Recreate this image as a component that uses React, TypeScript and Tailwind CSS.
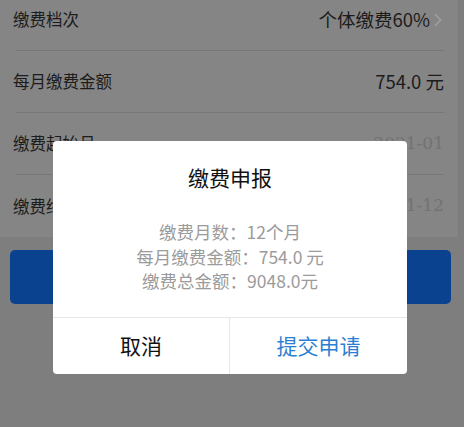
import { ChevronRight } from "lucide-react";

const FONT = { fontFamily: '"Noto Sans CJK SC", "Noto Sans", sans-serif' };

const rows = [
  { label: "缴费档次", value: "个体缴费60%", arrow: true },
  { label: "每月缴费金额", value: "754.0 元" },
  { label: "缴费起始月", value: "2021-01", muted: true },
  { label: "缴费终止月", value: "2021-12", muted: true },
];

export default function App() {
  return (
    <div className="relative w-[464px] h-[427px] overflow-hidden bg-[#7e7e7e]" style={FONT}>
      {/* page under the mask */}
      <div className="w-[459px] bg-[#858585] border-r border-[#7a7a7a] -mt-[11px]">
        {rows.map((r, i) => (
          <div key={r.label} className="pl-[16px] pr-[14px]">
            <div className={`h-[62px] flex items-center justify-between ${i < rows.length - 1 ? "border-b border-[#777777]" : ""}`}>
              <span className="-ml-[3px] text-[16.5px] text-[#1c1c1c]">{r.label}</span>
              {r.muted ? (
                <span className="text-[17px] text-[#727272]" style={{ fontFamily: '"DejaVu Serif", "Liberation Serif", serif' }}>{r.value}</span>
              ) : (
                <span className="flex items-center text-[18.5px] text-[#1c1c1c]">
                  {r.value}
                  {r.arrow && <ChevronRight size={22} strokeWidth={1.6} className="text-[#a0a0a0] -mr-[5px] -ml-[3px]" />}
                </span>
              )}
            </div>
          </div>
        ))}
      </div>
      <div className="pl-[10px] pr-[13px] mt-[13px]">
        <div className="h-[54px] rounded-[5px] bg-[#0b4290]" />
      </div>

      {/* dialog */}
      <div className="absolute left-[53px] top-[141px] w-[354px] rounded-[4px] bg-white overflow-hidden">
        <div className="pt-[21px] pb-[23px] text-center">
          <p className="text-[21px] leading-[30px] text-[#111111]">缴费申报</p>
          <div className="mt-[28px] text-[17.5px] leading-[24.5px] text-[#9b9b9b]">
            <p>缴费月数：12个月</p>
            <p>每月缴费金额：754.0 元</p>
            <p>缴费总金额：9048.0元</p>
          </div>
        </div>
        <div className="flex h-[57px] border-t border-[#e6e6e6]">
          <button type="button" className="w-[177px] flex items-center justify-center text-[21px] text-[#111111] border-r border-[#e6e6e6]">取消</button>
          <button type="button" className="flex-1 flex items-center justify-center text-[21px] text-[#2b7fd2]">提交申请</button>
        </div>
      </div>
    </div>
  );
}
